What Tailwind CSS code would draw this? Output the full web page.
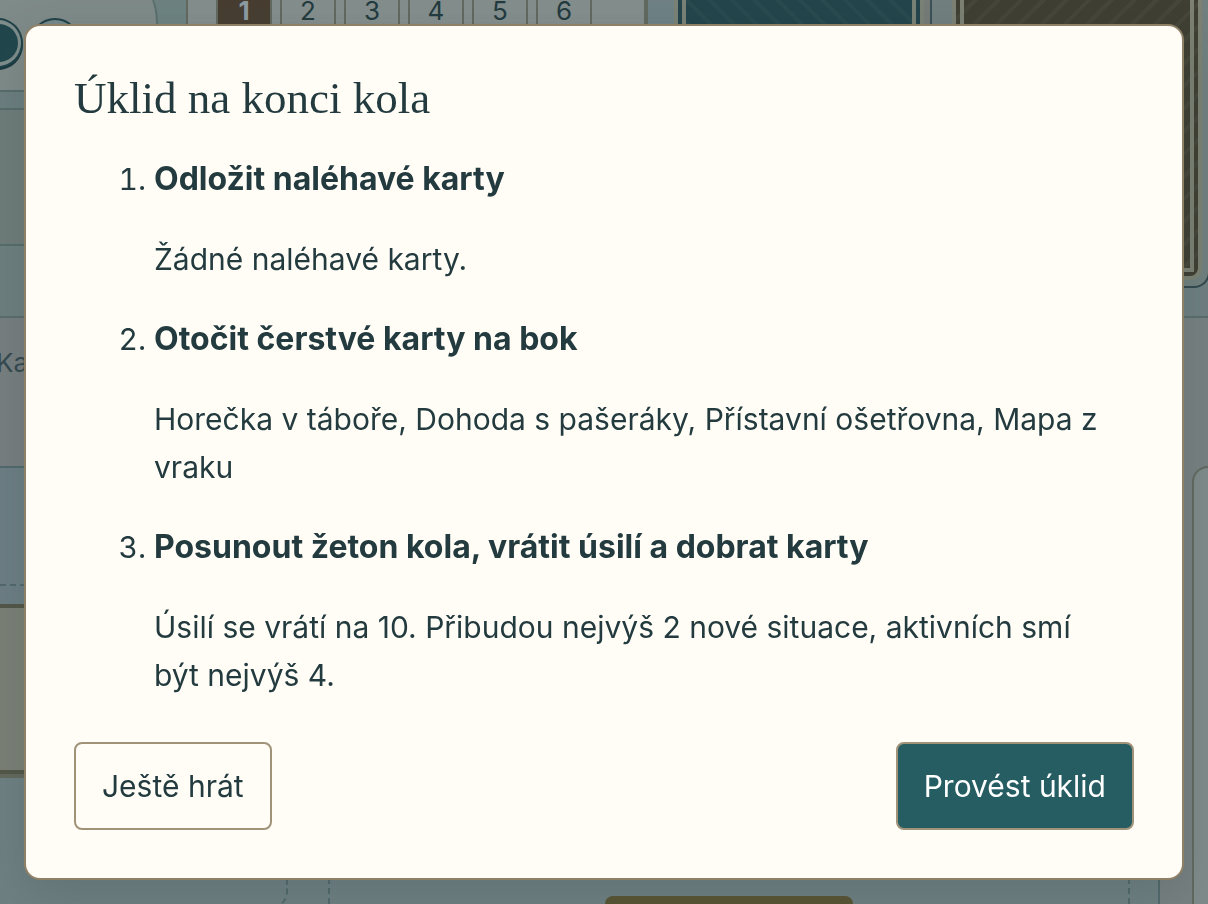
<!DOCTYPE html>
<html lang="cs">
<head>
    <meta charset="UTF-8">
    <meta name="viewport" content="width=device-width, initial-scale=1.0">
    <title>Úklid na konci kola</title>
    <script src="https://cdn.jsdelivr.net/npm/@tailwindcss/browser@4"></script>
</head>
<body class="font-['Inter','Liberation_Sans',sans-serif] text-[#233b3f] bg-[#6f8083]">
    <!-- Game table -->
    <main class="h-screen flex flex-col overflow-hidden" inert>
        <header class="flex h-[318px] shrink-0 border-b-2 border-[#5a6e6d] bg-[#6f7f82]">
            <div class="w-[186px] shrink-0 flex flex-col bg-[#6e7f7f]">
                <div class="h-[92px] border-b-2 border-[#566d6b]">
                    <svg class="block w-full h-[90px]" viewBox="0 0 186 90">
                        <rect width="186" height="90" fill="#6e8282"/>
                        <path d="M0 0h153q4 10 4 24v66H0z" fill="#7f8b89"/>
                        <path d="M153 0q4 10 4 24v66" fill="none" stroke="#5a706d" stroke-width="2"/>
                        <circle cx="-2" cy="45" r="25" fill="#1b3a41"/>
                        <circle cx="-2" cy="43" r="25" fill="#1f4248"/>
                        <circle cx="-2" cy="43" r="23" fill="#7f8e8c"/>
                        <circle cx="-1" cy="43" r="19" fill="#21474d"/>
                        <circle cx="55" cy="43" r="24" fill="#76888a" stroke="#1f4248" stroke-width="2"/>
                    </svg>
                </div>
                <div class="h-[18px] border-b-2 border-[#566d6b] bg-[#6c7e80]"></div>
                <div class="h-[136px] border-b-2 border-[#566d6b] bg-[#6f7d7a]"></div>
                <div class="flex-1"></div>
            </div>
            <!-- Round track -->
            <ol class="w-[462px] shrink-0 flex gap-2 pl-7 border-l-2 border-r-4 border-[#62695f] bg-[#848e8d] text-[26px] leading-[22px] text-center">
                <li class="w-14 border-x-2 border-[#62695f] bg-[#473e31] font-bold text-[#8d9ca2]">1</li>
                <li class="w-14 border-x-2 border-[#62695f]">2</li>
                <li class="w-14 border-x-2 border-[#62695f]">3</li>
                <li class="w-14 border-x-2 border-[#62695f]">4</li>
                <li class="w-14 border-x-2 border-[#62695f]">5</li>
                <li class="w-14 border-x-2 border-[#62695f]">6</li>
            </ol>
            <!-- Decks -->
            <div class="w-[284px] shrink-0 h-[288px] pl-[26px] pr-[6px] pb-2 border-r-2 border-[#3a5155] bg-[linear-gradient(90deg,#6f8286_80%,#767b77)]">
                <div class="h-full border-4 border-t-0 border-[#7a8277] bg-[#23454b] px-1 pb-1">
                    <div class="h-full border-4 border-t-0 border-[#7a8277] bg-[repeating-linear-gradient(45deg,#23454b_0_12px,#294a4f_12px_16px)]"></div>
                </div>
            </div>
            <div class="w-[278px] shrink-0 h-[288px] pl-5 pr-[6px] pb-[6px] rounded-br-2xl border-r-2 border-b-2 border-[#33494d] bg-[#71807f]">
                <div class="h-full rounded-b-xl border-4 border-t-0 border-[#7c8174] bg-[repeating-linear-gradient(135deg,#403f33_0_12px,#46463a_12px_16px)] px-1 pb-1">
                    <div class="h-full border-4 border-t-0 border-[#7c8174]"></div>
                </div>
            </div>
        </header>
        <div class="flex flex-1 min-h-0">
            <div class="flex-1 flex flex-col">
                <div class="h-[150px] shrink-0 border-b-2 border-[#526a6d] bg-[#787f80] pt-7 text-[26px] leading-[34px]">
                    <h2 class="-ml-1 text-[#344a50]">Karty</h2>
                </div>
                <div class="h-[136px] shrink-0 pb-[18px] bg-[#6d7f84]">
                    <div class="h-full border-b-2 border-dashed border-[#526a6d]"></div>
                </div>
                <div class="h-[174px] shrink-0 border-b-4 border-[#64695d]">
                    <div class="h-full border-y-4 border-[#535748] bg-[#7b8076]"></div>
                </div>
                <div class="flex-1 flex gap-10 pr-7 bg-[#6f8083]">
                    <div class="w-[288px] -mb-1 border-r-2 border-b-2 border-dashed border-[#526a6d] rounded-br-2xl"></div>
                    <div class="flex-1 flex items-end justify-center border-x-2 border-dashed border-[#526a6d]">
                        <div class="w-[248px] h-2 rounded-t-xl bg-[#5a5434]"></div>
                    </div>
                </div>
            </div>
            <aside class="w-[50px] shrink-0 pl-8 pt-[148px] border-l-2 border-[#526a6d] bg-[#788181]">
                <div class="h-full rounded-tl-2xl border-l-2 border-t-2 border-[#62695f] bg-[#7f8b8a]"></div>
            </aside>
        </div>
    </main>

    <!-- Dialog -->
    <div class="fixed inset-0 flex items-start p-6">
        <section role="dialog" aria-modal="true" aria-labelledby="title" class="w-full rounded-2xl border-2 border-[#8f8068] bg-[#fffdf6] p-12 text-[30px] leading-[48px] shadow-[0_16px_48px_#23393d30]">
            <h1 id="title" class="font-['Liberation_Serif',serif] text-[45px] leading-[49px]">Úklid na konci kola</h1>
            <ol class="mt-8 pl-20 pr-4 list-decimal flex flex-col gap-8">
                <li>
                    <h2 class="text-[32px] leading-[48px] font-bold">Odložit naléhavé karty</h2>
                    <p class="mt-8">Žádné naléhavé karty.</p>
                </li>
                <li>
                    <h2 class="text-[32px] leading-[48px] font-bold">Otočit čerstvé karty na bok</h2>
                    <p class="mt-8">Horečka v táboře, Dohoda s pašeráky, Přístavní ošetřovna, Mapa z vraku</p>
                </li>
                <li>
                    <h2 class="text-[32px] leading-[48px] font-bold">Posunout žeton kola, vrátit úsilí a dobrat karty</h2>
                    <p class="mt-8">Úsilí se vrátí na 10. Přibudou nejvýš 2 nové situace, aktivních smí být nejvýš 4.</p>
                </li>
            </ol>
            <div class="mt-[43px] flex justify-between">
                <button type="button" class="h-[88px] px-[26px] rounded-lg border-2 border-[#a1927a]">Ještě hrát</button>
                <button type="button" class="h-[88px] px-[26px] rounded-lg border-2 border-[#a1927a] bg-[#255d62] text-white">Provést úklid</button>
            </div>
        </section>
    </div>
</body>
</html>
